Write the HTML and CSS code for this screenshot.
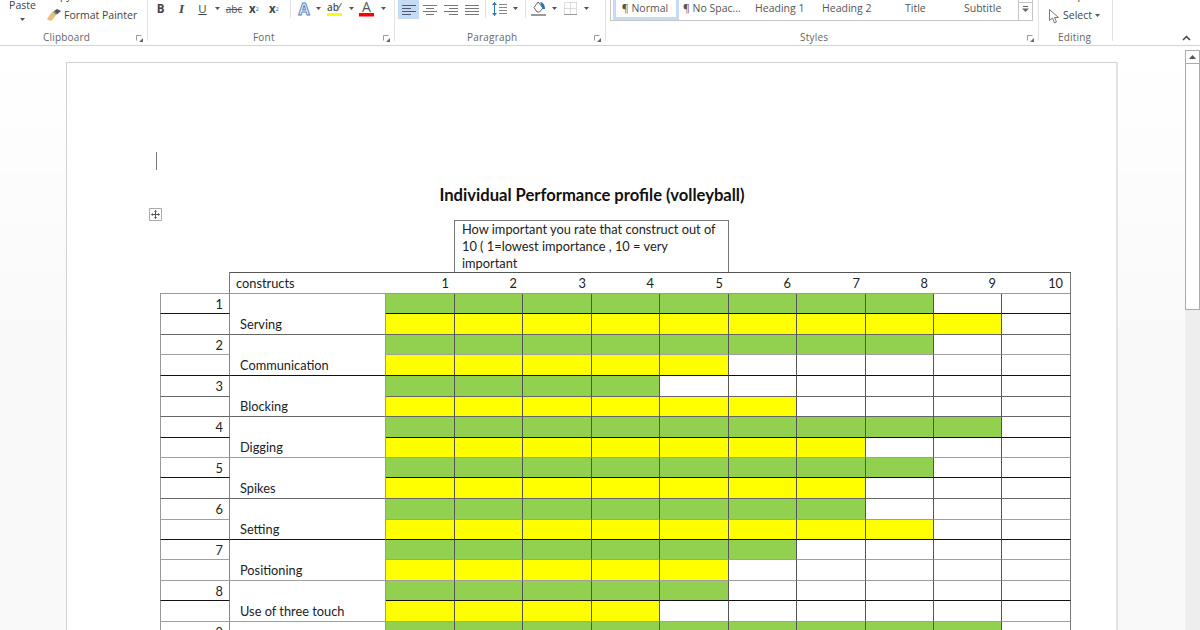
FILE: index.html
```html
<!DOCTYPE html>
<html lang="en">
<head>
<meta charset="utf-8">
<title>Individual Performance profile</title>
<link rel="stylesheet" href="styles.css">
</head>
<body>
<div class="ribbon">
  <section class="group clipboard">
    <div class="tools">
      <div class="paste"><span>Paste</span><svg class="caret" viewBox="0 0 5 3"><path d="M0 0h5L2.500 3z"/></svg></div>
      <div class="stack">
        <div class="line">Copy</div>
        <div class="line"><svg class="brush" viewBox="0 0 14 12"><path d="M0 10l5-7 4 3-4 5.500H2z" fill="#e8bd7d"/><path d="M7 2l3-2 4 2-4 3.500z" fill="#555"/><path d="M5.500 3l2-1 2.500 3-1 1z" fill="#888"/></svg>Format Painter</div>
      </div>
    </div>
    <div class="foot"><span class="lab-clip">Clipboard</span><svg class="launch" viewBox="0 0 7 7"><path d="M.5 5.500V.5h5" fill="none" stroke="#999"/><path d="M7 3v4H3z" fill="#666"/></svg></div>
  </section>
  <section class="group font">
    <div class="tools row">
      <b class="ic w21 big">B</b><i class="ic w21 ital">I</i><u class="ic w21 big under">U</u>
      <span class="ic w9"><svg class="caret" viewBox="0 0 5 3"><path d="M0 0h5L2.500 3z"/></svg></span>
      <s class="ic w24 abc">abc</s>
      <span class="ic w16 sub">x<sub>2</sub></span>
      <span class="ic w24 sub">x<sup>2</sup></span>
      <span class="sep m1"></span>
      <span class="ic w18"><svg class="i16" viewBox="0 0 16 16"><text class="effect" x="8" y="14" text-anchor="middle">A</text></svg></span>
      <span class="ic w11"><svg class="caret" viewBox="0 0 5 3"><path d="M0 0h5L2.500 3z"/></svg></span>
      <span class="ic w22"><svg class="i16" viewBox="0 0 16 16"><text class="hl" x="0" y="10">ab</text><path d="M9 10l5-8 1 .6-5 8z" fill="#777"/><path d="M0 12h15v3H0z" fill="#ffff00"/></svg></span>
      <span class="ic w10"><svg class="caret" viewBox="0 0 5 3"><path d="M0 0h5L2.500 3z"/></svg></span>
      <span class="ic w22"><svg class="i16" viewBox="0 0 16 16"><text class="fontcolor" x="7.500" y="11" text-anchor="middle">A</text><path d="M0 12h15v3.500H0z" fill="#f00"/></svg></span>
      <span class="ic w10"><svg class="caret" viewBox="0 0 5 3"><path d="M0 0h5L2.500 3z"/></svg></span>
    </div>
    <div class="foot"><span class="lab-font">Font</span><svg class="launch" viewBox="0 0 7 7"><path d="M.5 5.500V.5h5" fill="none" stroke="#999"/><path d="M7 3v4H3z" fill="#666"/></svg></div>
  </section>
  <section class="group para">
    <div class="tools row">
      <span class="btn on w21"><svg class="i14" viewBox="0 0 14 10"><path d="M0 .5h14M0 3.500h9M0 6.500h14M0 9.500h9" stroke="#557"/></svg></span>
      <span class="btn w21"><svg class="i14" viewBox="0 0 14 10"><path d="M0 .5h14M3 3.500h8M0 6.500h14M3 9.500h8" stroke="#777"/></svg></span>
      <span class="btn w21"><svg class="i14" viewBox="0 0 14 10"><path d="M0 .5h14M5 3.500h9M0 6.500h14M5 9.500h9" stroke="#777"/></svg></span>
      <span class="btn w21"><svg class="i14" viewBox="0 0 14 10"><path d="M0 .5h14M0 3.500h14M0 6.500h14M0 9.500h14" stroke="#777"/></svg></span>
      <span class="sep m2"></span>
      <span class="ic w22"><svg class="i16" viewBox="0 0 16 16"><path d="M2.500 1v14" stroke="#2f75b5"/><path d="M0 4l2.500-3L5 4zM0 12l2.500 3L5 12z" fill="#2f75b5"/><path d="M7 3.500h8M7 6.500h8M7 9.500h8M7 12.500h8" stroke="#888"/></svg></span>
      <span class="ic w8"><svg class="caret" viewBox="0 0 5 3"><path d="M0 0h5L2.500 3z"/></svg></span>
      <span class="sep m3"></span>
      <span class="ic w20"><svg class="i16" viewBox="0 0 16 16"><path d="M3 6.500L7 1l5 6-3.500 4H6z" fill="#fff" stroke="#666"/><path d="M9 1c3 0 5 3 5 7h-2.500z" fill="#2f75b5"/><path d="M0 14h15" stroke="#777" stroke-width="1.500"/></svg></span>
      <span class="ic w10"><svg class="caret" viewBox="0 0 5 3"><path d="M0 0h5L2.500 3z"/></svg></span>
      <span class="ic w22"><svg class="i13" viewBox="0 0 13 13"><path d="M.5.5h12v12H.5zM6.500.5v12M.5 6.500h12" fill="none" stroke="#bbb" stroke-dasharray="1 1"/><path d="M0 12.500h13" stroke="#999"/></svg></span>
      <span class="ic w10"><svg class="caret" viewBox="0 0 5 3"><path d="M0 0h5L2.500 3z"/></svg></span>
    </div>
    <div class="foot"><span class="lab-para">Paragraph</span><svg class="launch" viewBox="0 0 7 7"><path d="M.5 5.500V.5h5" fill="none" stroke="#999"/><path d="M7 3v4H3z" fill="#666"/></svg></div>
  </section>
  <section class="group styles">
    <div class="gallery">
      <span class="style normal">¶ Normal</span>
      <span class="style nospace">¶ No Spac...</span>
      <span class="style h1s">Heading 1</span>
      <span class="style h2s">Heading 2</span>
      <span class="style titles">Title</span>
      <span class="style subs">Subtitle</span>
      <span class="more"><svg class="more-ic" viewBox="0 0 7 6"><path d="M1 .5h5" stroke="#666"/><path d="M0 2.500h7L3.500 6z" fill="#666"/></svg></span>
    </div>
    <div class="foot"><span class="lab-styles">Styles</span><svg class="launch" viewBox="0 0 7 7"><path d="M.5 5.500V.5h5" fill="none" stroke="#999"/><path d="M7 3v4H3z" fill="#666"/></svg></div>
  </section>
  <section class="group editing">
    <div class="tools">
      <div class="stack edit">
        <div class="line">Replace</div>
        <div class="line"><svg class="pointer" viewBox="0 0 10 15"><path d="M.5.500v11l3-2.500 2 5 2-1-2-4.500h4z" fill="#fff" stroke="#777"/></svg>Select<svg class="caret sel" viewBox="0 0 5 3"><path d="M0 0h5L2.500 3z"/></svg></div>
      </div>
    </div>
    <div class="foot"><span class="lab-edit">Editing</span></div>
  </section>
  <svg class="collapse" viewBox="0 0 9 6"><path d="M1 5l3.500-3.500L8 5" fill="none" stroke="#444" stroke-width="1.500"/></svg>
</div>
<div class="workspace">
  <main class="page">
    <span class="ibeam"></span>
    <h1 class="title">Individual Performance profile (volleyball)</h1>
    <div class="table-wrap">
      <svg class="handle" viewBox="0 0 13 13"><path d="M.5.500h12v12H.5z" fill="#fff" stroke="#aaa"/><path d="M6.500 2.500v8M2.500 6.500h8" stroke="#555"/><path d="M5 4l1.500-2L8 4zM5 9l1.500 2L8 9zM4 5L2 6.500 4 8zM9 5l2 1.500L9 8z" fill="#555"/></svg>
      <div class="note">How important you rate that construct out of 10 ( 1=lowest importance , 10 = very important</div>
      <table class="grid">
        <colgroup><col class="c1"><col class="c2"><col class="a"><col class="b"><col class="a"><col class="b"><col class="a"><col class="b"><col class="a"><col class="b"><col class="b"><col class="a"></colgroup>
        <tr class="head"><td class="none"></td><td class="cons">constructs</td><td>1</td><td>2</td><td>3</td><td>4</td><td>5</td><td>6</td><td>7</td><td>8</td><td>9</td><td class="end">10</td></tr>
        <tr class="h20 bk"><td class="num">1</td><td class="name nd" rowspan="2">Serving</td><td class="g"></td><td class="g"></td><td class="g"></td><td class="g"></td><td class="g"></td><td class="g"></td><td class="g"></td><td class="g"></td><td></td><td></td></tr>
        <tr class="h21 bd"><td class="num"></td><td class="y"></td><td class="y"></td><td class="y"></td><td class="y"></td><td class="y"></td><td class="y"></td><td class="y"></td><td class="y"></td><td class="y"></td><td></td></tr>
        <tr class="h20 bg"><td class="num">2</td><td class="name nk" rowspan="2">Communication</td><td class="g"></td><td class="g"></td><td class="g"></td><td class="g"></td><td class="g"></td><td class="g"></td><td class="g"></td><td class="g"></td><td></td><td></td></tr>
        <tr class="h21 bk"><td class="num"></td><td class="y"></td><td class="y"></td><td class="y"></td><td class="y"></td><td class="y"></td><td></td><td></td><td></td><td></td><td></td></tr>
        <tr class="h21 bd"><td class="num">3</td><td class="name nd" rowspan="2">Blocking</td><td class="g"></td><td class="g"></td><td class="g"></td><td class="g"></td><td></td><td></td><td></td><td></td><td></td><td></td></tr>
        <tr class="h20 bd"><td class="num"></td><td class="y"></td><td class="y"></td><td class="y"></td><td class="y"></td><td class="y"></td><td class="y"></td><td></td><td></td><td></td><td></td></tr>
        <tr class="h21 bk"><td class="num">4</td><td class="name ng" rowspan="2">Digging</td><td class="g"></td><td class="g"></td><td class="g"></td><td class="g"></td><td class="g"></td><td class="g"></td><td class="g"></td><td class="g"></td><td class="g"></td><td></td></tr>
        <tr class="h20 bg"><td class="num"></td><td class="y"></td><td class="y"></td><td class="y"></td><td class="y"></td><td class="y"></td><td class="y"></td><td class="y"></td><td></td><td></td><td></td></tr>
        <tr class="h20 bk"><td class="num">5</td><td class="name nd" rowspan="2">Spikes</td><td class="g"></td><td class="g"></td><td class="g"></td><td class="g"></td><td class="g"></td><td class="g"></td><td class="g"></td><td class="g"></td><td></td><td></td></tr>
        <tr class="h21 bd"><td class="num"></td><td class="y"></td><td class="y"></td><td class="y"></td><td class="y"></td><td class="y"></td><td class="y"></td><td class="y"></td><td></td><td></td><td></td></tr>
        <tr class="h21 bg"><td class="num">6</td><td class="name nk" rowspan="2">Setting</td><td class="g"></td><td class="g"></td><td class="g"></td><td class="g"></td><td class="g"></td><td class="g"></td><td class="g"></td><td></td><td></td><td></td></tr>
        <tr class="h20 bk"><td class="num"></td><td class="y"></td><td class="y"></td><td class="y"></td><td class="y"></td><td class="y"></td><td class="y"></td><td class="y"></td><td class="y"></td><td></td><td></td></tr>
        <tr class="h20 bg"><td class="num">7</td><td class="name ng" rowspan="2">Positioning</td><td class="g"></td><td class="g"></td><td class="g"></td><td class="g"></td><td class="g"></td><td class="g"></td><td></td><td></td><td></td><td></td></tr>
        <tr class="h21 bg"><td class="num"></td><td class="y"></td><td class="y"></td><td class="y"></td><td class="y"></td><td class="y"></td><td></td><td></td><td></td><td></td><td></td></tr>
        <tr class="h20 bk"><td class="num">8</td><td class="name ng" rowspan="2">Use of three touch</td><td class="g"></td><td class="g"></td><td class="g"></td><td class="g"></td><td class="g"></td><td></td><td></td><td></td><td></td><td></td></tr>
        <tr class="h21 bg"><td class="num"></td><td class="y"></td><td class="y"></td><td class="y"></td><td class="y"></td><td></td><td></td><td></td><td></td><td></td><td></td></tr>
        <tr class="h20 bg"><td class="num">9</td><td class="name ng"></td><td class="g"></td><td class="g"></td><td class="g"></td><td class="g"></td><td class="g"></td><td class="g"></td><td class="g"></td><td class="g"></td><td class="g"></td><td></td></tr>
      </table>
    </div>
  </main>
  <aside class="scrollbar">
    <div class="up"><svg class="up-ic" viewBox="0 0 7 4"><path d="M0 4l3.500-4L7 4z"/></svg></div>
    <div class="thumb"></div>
    <div class="rest"></div>
  </aside>
</div>
</body>
</html>
```
FILE: styles.css
```css
* { box-sizing: border-box; }
html, body { margin: 0; padding: 0; }
body { width: 1200px; height: 630px; overflow: hidden; background: #fff; font-family: "Open Sans", "Liberation Sans", sans-serif; color: #444; }

.ribbon { display: flex; height: 46px; border-bottom: 1px solid #d4d4d4; background: #fff; overflow: hidden; position: relative; }
.group { height: 41px; border-right: 1px solid #e2e2e2; flex: none; display: flex; flex-direction: column; }
.clipboard { width: 148px; }
.font { width: 247px; padding-left: 2px; }
.para { width: 211px; padding-left: 3px; }
.styles { width: 433px; padding-left: 4px; }
.editing { width: 74px; }

.tools { height: 30px; flex: none; display: flex; font-size: 10.500px; }
.row { align-items: flex-start; }
.foot { height: 14px; flex: none; display: flex; align-items: center; font-size: 10px; line-height: 14px; color: #666; letter-spacing: .2px; padding-right: 4px; }
.foot span { flex: none; }
.launch { width: 7px; height: 7px; margin-left: auto; margin-top: 3px; }
.lab-clip { margin-left: 43px; }
.lab-font { margin-left: 103px; }
.lab-para { margin-left: 69px; }
.lab-styles { margin-left: 190px; }
.lab-edit { margin-left: 19px; }

.paste { width: 45px; height: 30px; display: flex; flex-direction: column; align-items: center; line-height: 10px; font-size: 10.500px; }
.caret { width: 5px; height: 3px; fill: #555; flex: none; }
.paste .caret { margin-top: 8px; }
.stack { margin-top: -15px; display: flex; flex-direction: column; }
.line { height: 20px; display: flex; align-items: center; white-space: nowrap; }
.clipboard .stack { padding-left: 2px; }
.brush { width: 14px; height: 12px; margin-right: 3px; }
.edit { padding-left: 10px; }
.edit .line:first-child { padding-left: 16px; }
.pointer { width: 10px; height: 15px; margin-right: 4px; margin-top: 3px; }
.sel { margin-left: 3px; }

.ic, .btn { height: 17px; display: flex; align-items: center; justify-content: center; flex: none; font-size: 10.500px; color: #444; }
.w8 { width: 8px; } .w9 { width: 9px; } .w10 { width: 10px; } .w11 { width: 11px; } .w16 { width: 16px; } .w18 { width: 18px; }
.w20 { width: 20px; } .w21 { width: 21px; } .w22 { width: 22px; } .w24 { width: 24px; }
.big { font-size: 11.500px; }
.under { text-decoration: underline; }
.ital { font-family: "Liberation Serif", serif; font-size: 13px; font-weight: 700; }
.abc { font-size: 10px; color: #555; }
.sub { font-weight: 700; font-size: 11.500px; }
.sub sub { font-size: 6px; color: #2f75b5; font-weight: 400; line-height: 0; }
.sub sup { font-size: 6px; color: #2f75b5; font-weight: 400; line-height: 0; }
.sep { width: 1px; height: 18px; background: #e2e2e2; flex: none; }
.m1 { margin: 0 4px; }
.m2 { margin: 0 3px 0 3px; }
.m3 { margin: 0 3px 0 6px; }
.i16 { width: 16px; height: 16px; overflow: visible; }
.i14 { width: 14px; height: 10px; }
.i13 { width: 13px; height: 13px; }
.effect { font-size: 16px; font-weight: 700; fill: #fff; stroke: #4a86c5; stroke-width: 1; }
.hl { font-size: 10px; fill: #555; font-weight: 600; }
.fontcolor { font-size: 14px; fill: #555; }
.btn { height: 19px; }
.on { background: #c5daf3; }

.gallery { height: 21px; margin-bottom: 9px; flex: none; border: 1px solid #c6c6c6; border-top: 0; display: flex; position: relative; font-size: 10.500px; width: 423px; }
.style { display: flex; align-items: center; height: 20px; padding-bottom: 5px; white-space: nowrap; flex: none; color: #555; }
.normal { width: 66px; margin-left: 2px; padding: 0 2px 2px 0; justify-content: center; background: #fff; border: 3px solid #c5daf3; border-top: 0; }
.nospace { width: 76px; padding-left: 4px; }
.h1s { width: 67px; }
.h2s { width: 83px; }
.titles { width: 59px; }
.subs { width: 53px; }
.more { width: 14px; height: 20px; border-left: 1px solid #c6c6c6; margin-left: auto; display: flex; align-items: center; justify-content: center; position: relative; padding-bottom: 2px; }
.more::before { content: ""; position: absolute; left: 0; right: 0; top: 2px; border-top: 1px solid #c6c6c6; }
.more-ic { width: 7px; height: 6px; }
.collapse { position: absolute; left: 1182px; top: 35px; width: 9px; height: 6px; }

.workspace { display: flex; height: 584px; background: linear-gradient(#fff, #f9f9f9 50%); padding-top: 2px; }
.page { margin: 14px 0 0 66px; width: 1052px; height: 700px; background: #fff; border: 1px solid #d2d2d2; border-right: 2px solid #e3e3e3; padding: 89px 0 0 93px; flex: none; font-family: Lato, "Liberation Sans", sans-serif; color: #222; }
.ibeam { display: block; width: 1px; height: 18px; margin-left: -4px; background: #777; }
.title { margin: 15px 92px 0 0; font-size: 16.600px; line-height: 20px; font-weight: 700; text-align: center; color: #111; }
.table-wrap { position: relative; margin-top: 15px; }
.handle { position: absolute; left: -11px; top: -12px; width: 13px; height: 13px; }
.note { margin-left: 294px; width: 275px; height: 52px; border: 1px solid #777; border-bottom: 0; padding: 0 6px 0 7px; font-size: 12.800px; line-height: 17px; }
.grid { border-collapse: separate; border-spacing: 0; table-layout: fixed; width: 911px; font-size: 12.800px; }
.c1 { width: 70px; } .c2 { width: 156px; } .a { width: 69px; } .b { width: 68px; }
.grid td { padding: 0; border-right: 1px solid #555; border-bottom: 1px solid #888; line-height: 14px; }
.grid tr > td:last-child { border-right-color: #777; }
.grid .head td { height: 22px; border-top: 1px solid #555; border-right-width: 0; border-bottom-color: #999; text-align: right; padding-right: 6px; }
.grid .head .none { border-top: 0; border-right: 1px solid #777; padding: 0; }
.grid .head .cons { text-align: left; padding: 0 0 0 6px; }
.grid .head .end { padding-right: 7px; border-right-width: 1px; }
.h20 td { height: 20px; }
.h21 td { height: 21px; }
.bk td { border-bottom-color: #111; }
.bd td { border-bottom-color: #666; }
.bg td { border-bottom-color: #a0a0a0; }
.grid .num { border-left: 1px solid #999; border-right-color: #888; text-align: right; padding-right: 6px; }
.grid .name { vertical-align: bottom; padding: 0 0 3px 10px; border-right-color: #999; }
.grid .nk { border-bottom-color: #111; }
.grid .nd { border-bottom-color: #666; }
.grid .ng { border-bottom-color: #a0a0a0; }
.g { background: #92d050; }
.y { background: #ffff00; }

.scrollbar { margin: 2px 0 0 auto; width: 15px; display: flex; flex-direction: column; flex: none; }
.up { height: 14px; border: 1px solid #ababab; background: #fff; display: flex; align-items: center; justify-content: center; }
.up-ic { width: 7px; height: 4px; fill: #555; }
.thumb { height: 246px; border: 1px solid #ababab; border-top: 0; background: #fff; }
.rest { flex: 1; background: #eee; }
```
